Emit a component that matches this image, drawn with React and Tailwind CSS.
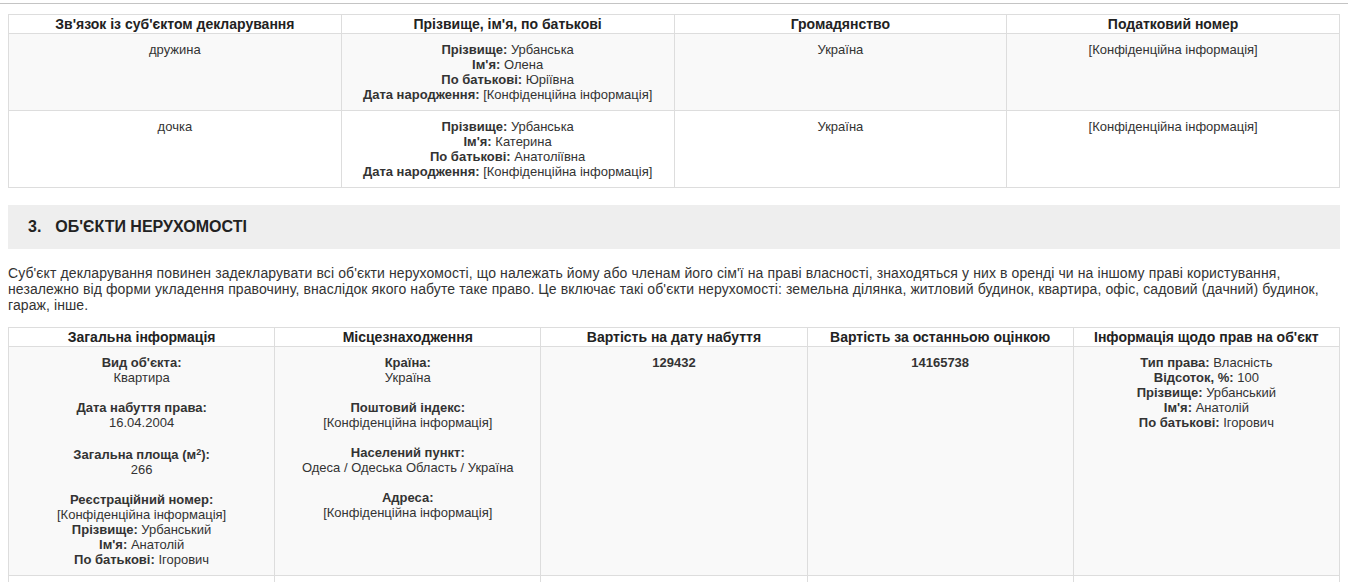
const family = [
  { relation: 'дружина', last: 'Урбанська', first: 'Олена', middle: 'Юріївна' },
  { relation: 'дочка', last: 'Урбанська', first: 'Катерина', middle: 'Анатоліївна' },
]

const CONF = '[Конфіденційна інформація]'

function Field({ label, children }) {
  return (
    <div>
      <b className="font-bold text-[#333]">{label}</b> {children}
    </div>
  )
}

function Block({ label, children, extra = '' }) {
  return (
    <div className="mb-[15px] last:mb-0">
      <div className={`font-bold text-[#333] ${extra}`}>{label}</div>
      <div>{children}</div>
    </div>
  )
}

export default function App() {
  const th = 'border border-[#ddd] px-2 h-[19px] py-0 text-[14px] leading-[17px] font-bold text-[#222] text-center'
  const td = 'border border-[#ddd] px-2 pt-2 pb-2 align-top text-center text-[13px] leading-[15px] text-[#333]'

  return (
    <div className="min-h-screen bg-white font-['Liberation_Sans',Arial,sans-serif] text-[#333]">
      <div className="pt-[3px]">
        <div className="border-t border-[#c4c4c4]" />
      </div>
      <div className="px-2 pt-[10px]">
        <table className="w-full table-fixed border-collapse">
          <thead>
            <tr>
              <th className={th}>Зв'язок із суб'єктом декларування</th>
              <th className={th}>Прізвище, ім'я, по батькові</th>
              <th className={th}>Громадянство</th>
              <th className={th}>Податковий номер</th>
            </tr>
          </thead>
          <tbody>
            {family.map((m, i) => (
              <tr key={m.relation} className={i % 2 === 0 ? 'bg-[#f9f9f9]' : 'bg-white'}>
                <td className={td}>{m.relation}</td>
                <td className={td}>
                  <Field label="Прізвище:">{m.last}</Field>
                  <Field label="Ім'я:">{m.first}</Field>
                  <Field label="По батькові:">{m.middle}</Field>
                  <Field label="Дата народження:">{CONF}</Field>
                </td>
                <td className={td}>Україна</td>
                <td className={td}>{CONF}</td>
              </tr>
            ))}
          </tbody>
        </table>

        <div className="mt-[17px] h-[44px] bg-[#eee] flex items-center pl-5">
          <h2 className="text-[16px] font-bold uppercase text-[#222]">
            <span className="mr-[14px]">3.</span>Об'єкти нерухомості
          </h2>
        </div>

        <p className="mt-4 mb-[14px] text-[14px] leading-4 tracking-[0.1px] text-[#333]">
          Суб'єкт декларування повинен задекларувати всі об'єкти нерухомості, що належать йому або членам його сім'ї на праві власності, знаходяться у них в оренді чи на іншому праві користування, незалежно від форми укладення правочину, внаслідок якого набуте таке право. Це включає такі об'єкти нерухомості: земельна ділянка, житловий будинок, квартира, офіс, садовий (дачний) будинок, гараж, інше.
        </p>

        <table className="w-full table-fixed border-collapse">
          <thead>
            <tr>
              <th className={th}>Загальна інформація</th>
              <th className={th}>Місцезнаходження</th>
              <th className={th}>Вартість на дату набуття</th>
              <th className={th}>Вартість за останньою оцінкою</th>
              <th className={th}>Інформація щодо прав на об'єкт</th>
            </tr>
          </thead>
          <tbody>
            <tr className="bg-[#f9f9f9]">
              <td className={td}>
                <Block label="Вид об'єкта:">Квартира</Block>
                <Block label="Дата набуття права:">16.04.2004</Block>
                <Block extra="pt-[2px]" label={<>Загальна площа (м<sup className="text-[9px]">2</sup>):</>}>266</Block>
                <div>
                  <div className="font-bold">Реєстраційний номер:</div>
                  <div>{CONF}</div>
                  <Field label="Прізвище:">Урбанський</Field>
                  <Field label="Ім'я:">Анатолій</Field>
                  <Field label="По батькові:">Ігорович</Field>
                </div>
              </td>
              <td className={td}>
                <Block label="Країна:">Україна</Block>
                <Block label="Поштовий індекс:">{CONF}</Block>
                <Block label="Населений пункт:">Одеса / Одеська Область / Україна</Block>
                <Block label="Адреса:">{CONF}</Block>
              </td>
              <td className={td}>
                <b className="font-bold">129432</b>
              </td>
              <td className={td}>
                <b className="font-bold">14165738</b>
              </td>
              <td className={td}>
                <Field label="Тип права:">Власність</Field>
                <Field label="Відсоток, %:">100</Field>
                <Field label="Прізвище:">Урбанський</Field>
                <Field label="Ім'я:">Анатолій</Field>
                <Field label="По батькові:">Ігорович</Field>
              </td>
            </tr>
            <tr className="bg-white">
              <td className={`${td} h-10`} />
              <td className={td} />
              <td className={td} />
              <td className={td} />
              <td className={td} />
            </tr>
          </tbody>
        </table>
      </div>
    </div>
  )
}
